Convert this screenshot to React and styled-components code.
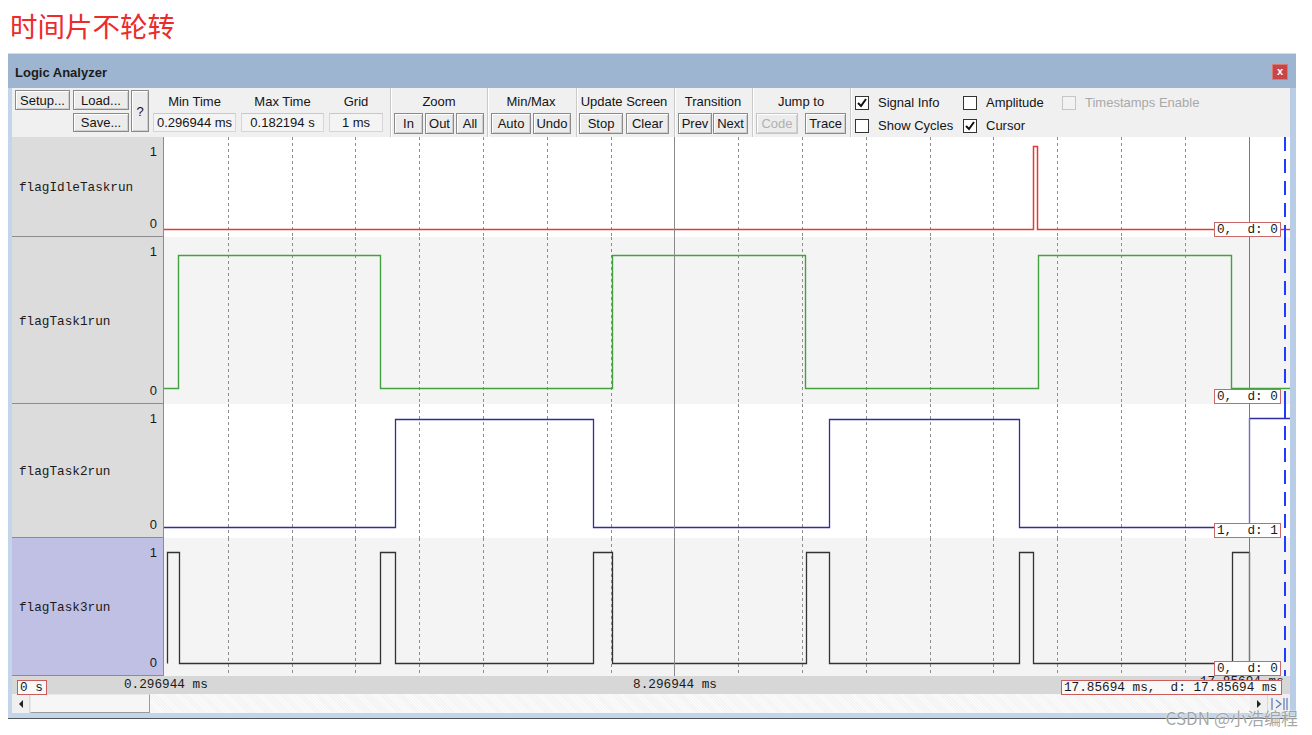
import React from 'react';
import styled, { createGlobalStyle } from 'styled-components';

const GlobalStyle = createGlobalStyle`
  html, body {
    margin: 0;
    padding: 0;
    background: #ffffff;
  }
  body {
    font-family: "Liberation Sans", Arial, sans-serif;
  }
  * {
    box-sizing: border-box;
  }
`;

// plot geometry (pixels)
const PLOT_W = 1126;
const GRID = 63.8;
const BOX_LEFT = 1050;

const signals = [
  {
    name: 'flagIdleTaskrun',
    h: 100,
    color: '#e43a36',
    width: 1.5,
    bg: '#ffffff',
    value: '0,  d: 0',
    path: 'M0 92.5 H869.5 V9.5 H873.5 V92.5 H1126',
  },
  {
    name: 'flagTask1run',
    h: 167,
    color: '#41a23f',
    width: 1.4,
    bg: '#f4f4f4',
    value: '0,  d: 0',
    path: 'M0 151.5 H14.5 V18.5 H216.5 V151.5 H448.5 V18.5 H641.5 V151.5 H874.5 V18.5 H1067.5 V151.5 H1126',
  },
  {
    name: 'flagTask2run',
    h: 134,
    color: '#2e2e9c',
    width: 1.3,
    bg: '#ffffff',
    value: '1,  d: 1',
    path: 'M0 123.5 H231.5 V15.5 H429.5 V123.5 H665.5 V15.5 H855.5 V123.5 H1085.5 V14.5 H1126',
  },
  {
    name: 'flagTask3run',
    h: 138,
    color: '#333333',
    width: 1.3,
    bg: '#f4f4f4',
    selected: true,
    value: '0,  d: 0',
    path: 'M3.5 125.5 V14.5 H15.5 V125.5 H216.5 V14.5 H231.5 V125.5 H429.5 V14.5 H448.5 V125.5 H642.5 V14.5 H665.5 V125.5 H855.5 V14.5 H869.5 V125.5 H1068.5 V14.5 H1085.5 V125.5',
  },
];

const gridLines = Array.from({ length: 16 }, (_, i) => i + 1).filter(k => k !== 8);

const Check = ({ checked, disabled, children }) => (
  <CheckItem $disabled={disabled}>
    <CheckBox $disabled={disabled}>
      {checked && (
        <svg width="12" height="12" viewBox="0 0 12 12">
          <path d="M2 6 L5 9 L10 2" stroke="#111" strokeWidth="2" fill="none" />
        </svg>
      )}
    </CheckBox>
    {children}
  </CheckItem>
);

const SignalRow = ({ sig }) => (
  <Row $h={sig.h}>
    <LabelCell $selected={sig.selected}>
      <Level>1</Level>
      <SignalName>{sig.name}</SignalName>
      <Level>0</Level>
    </LabelCell>
    <Plot $bg={sig.bg}>
      <svg width={PLOT_W} height={sig.h} style={{ display: 'block' }}>
        {gridLines.map(k => (
          <line
            key={k}
            x1={Math.round(k * GRID) + 0.5}
            x2={Math.round(k * GRID) + 0.5}
            y1="0"
            y2={sig.h}
            stroke="#8e8e8e"
            strokeDasharray="3 3"
          />
        ))}
        <path d={sig.path} stroke={sig.color} strokeWidth={sig.width} fill="none" />
        <line x1="510.5" x2="510.5" y1="0" y2={sig.h} stroke="#8a8a8a" />
        <line x1="1085.5" x2="1085.5" y1="0" y2={sig.h} stroke="#7a7a7a" />
        <line x1="1121" x2="1121" y1="0" y2={sig.h} stroke="#1f3cff" strokeWidth="2" strokeDasharray="14 8" />
      </svg>
      <ValueTag>{sig.value}</ValueTag>
    </Plot>
  </Row>
);

const App = () => {
  return (
    <Page>
      <GlobalStyle />
      <Heading>时间片不轮转</Heading>

      <Window>
        <TitleBar>
          <TitleText>Logic Analyzer</TitleText>
          <CloseButton>x</CloseButton>
        </TitleBar>

        <Body>
          <Toolbar>
            <FileGroup>
              <FileCol $mr={1}>
                <Btn $w={55} $h={20}>Setup...</Btn>
              </FileCol>
              <FileCol>
                <Btn $w={56} $h={20}>Load...</Btn>
                <Btn $w={56} $h={19}>Save...</Btn>
              </FileCol>
              <Btn $w={18} $h={42}>?</Btn>
            </FileGroup>

            <TimeGroup>
              <Field>
                <GroupLabel>Min Time</GroupLabel>
                <ValueField $w={83}>0.296944 ms</ValueField>
              </Field>
              <Field>
                <GroupLabel>Max Time</GroupLabel>
                <ValueField $w={83}>0.182194 s</ValueField>
              </Field>
              <Field>
                <GroupLabel>Grid</GroupLabel>
                <ValueField $w={54}>1 ms</ValueField>
              </Field>
            </TimeGroup>
            <Separator />

            <Group $pl={2} $pr={3}>
              <GroupLabel>Zoom</GroupLabel>
              <BtnRow $gap={2}>
                <Btn $w={29}>In</Btn>
                <Btn $w={29}>Out</Btn>
                <Btn $w={28}>All</Btn>
              </BtnRow>
            </Group>
            <Separator />

            <Group $pl={2} $pr={5}>
              <GroupLabel>Min/Max</GroupLabel>
              <BtnRow $gap={2}>
                <Btn $w={40}>Auto</Btn>
                <Btn $w={38}>Undo</Btn>
              </BtnRow>
            </Group>
            <Separator />

            <Group $pl={1} $pr={5}>
              <GroupLabel>Update Screen</GroupLabel>
              <BtnRow $gap={3}>
                <Btn $w={44}>Stop</Btn>
                <Btn $w={43}>Clear</Btn>
              </BtnRow>
            </Group>
            <Separator />

            <Group $pl={2} $pr={4}>
              <GroupLabel>Transition</GroupLabel>
              <BtnRow $gap={1}>
                <Btn $w={34}>Prev</Btn>
                <Btn $w={35}>Next</Btn>
              </BtnRow>
            </Group>
            <Separator />

            <Group $pl={2} $pr={4}>
              <GroupLabel>Jump to</GroupLabel>
              <BtnRow $gap={7}>
                <Btn $w={42} disabled>Code</Btn>
                <Btn $w={41}>Trace</Btn>
              </BtnRow>
            </Group>
            <Separator />

            <CheckGrid>
              <Check checked>Signal Info</Check>
              <Check>Amplitude</Check>
              <Check disabled>Timestamps Enable</Check>
              <Check>Show Cycles</Check>
              <Check checked>Cursor</Check>
            </CheckGrid>
          </Toolbar>

          <Signals>
            {signals.map(sig => (
              <SignalRow key={sig.name} sig={sig} />
            ))}
          </Signals>

          <TimeBar>
            <TimeBox $left={5} $w={30}>0 s</TimeBox>
            <TimeLabel $left={112}>0.296944 ms</TimeLabel>
            <TimeLabel $left={663} $center>8.296944 ms</TimeLabel>
            <HiddenLabel>17.85694 ms</HiddenLabel>
            <TimeBox $left={1049} $w={221}>17.85694 ms,  d: 17.85694 ms</TimeBox>
          </TimeBar>

          <ScrollBar>
            <ScrollButton>
              <svg width="6" height="8" viewBox="0 0 6 8"><path d="M5 0 L1 4 L5 8 Z" fill="#222" /></svg>
            </ScrollButton>
            <ScrollThumb />
            <ScrollTrack />
            <ScrollButton>
              <svg width="6" height="8" viewBox="0 0 6 8"><path d="M1 0 L5 4 L1 8 Z" fill="#222" /></svg>
            </ScrollButton>
            <EndButton>
              <svg width="20" height="16" viewBox="0 0 20 16">
                <path d="M3 2 V14 M7 4 L12 8 L7 12 M15 2 V14 M18 2 V14" stroke="#5a78b8" strokeWidth="1.2" fill="none" />
              </svg>
            </EndButton>
          </ScrollBar>
        </Body>
      </Window>

      <Watermark>CSDN @小浩编程</Watermark>
    </Page>
  );
};

export default App;

const Page = styled.div`
  position: relative;
  width: 1312px;
  height: 735px;
  overflow: hidden;
  background: #ffffff;
`;

const Heading = styled.div`
  height: 53px;
  line-height: 50px;
  padding-left: 10px;
  font-family: "Noto Sans CJK SC", "Noto Sans", sans-serif;
  font-size: 27.5px;
  color: #ec2b2b;
`;

const Window = styled.div`
  margin-left: 8px;
  width: 1288px;
  border-top: 1px solid #d4dbe4;
`;

const TitleBar = styled.div`
  height: 34px;
  background: #9db5d1;
  display: flex;
  align-items: center;
  justify-content: space-between;
  padding: 0 8px 0 7px;
`;

const TitleText = styled.div`
  font-size: 13px;
  font-weight: 700;
  color: #1b1b1b;
  padding-top: 3px;
`;

const CloseButton = styled.div`
  width: 16px;
  height: 16px;
  margin-top: 1px;
  background: #c94646;
  border: 1px solid #d97a7a;
  color: #ffffff;
  font-size: 11px;
  font-weight: 700;
  line-height: 13px;
  text-align: center;
`;

const Body = styled.div`
  border-left: 4px solid #c3d5ea;
  border-right: 6px solid #b9cde6;
  border-bottom: 5px solid #c3d5ea;
  box-shadow: 0 1px 0 #555555;
  background: #f0f0f0;
`;

const Toolbar = styled.div`
  display: flex;
  height: 49px;
  padding-left: 3px;
  background: #f0f0f0;
  color: #141414;
`;

const FileGroup = styled.div`
  display: flex;
  align-items: flex-start;
  gap: 2px;
  padding-top: 2px;
`;

const FileCol = styled.div`
  display: flex;
  flex-direction: column;
  gap: 3px;
  margin-right: ${p => p.$mr || 0}px;
`;

const Btn = styled.button`
  width: ${p => p.$w}px;
  height: ${p => p.$h || 21}px;
  padding: 0;
  font-family: "Liberation Sans", Arial, sans-serif;
  font-size: 13px;
  color: ${p => (p.disabled ? '#b0b0b0' : '#141414')};
  background: #ececec;
  border: 1px solid ${p => (p.disabled ? '#c4c4c4' : '#8a8a8a')};
  box-shadow: inset 1px 1px 0 #ffffff, inset -1px -1px 0 #cfcfcf;
  border-radius: 0;
  white-space: nowrap;
  overflow: hidden;
`;

const TimeGroup = styled.div`
  display: flex;
  gap: 5px;
  padding: 4px 7px 0 4px;
`;

const Field = styled.div`
  display: flex;
  flex-direction: column;
  align-items: center;
`;

const GroupLabel = styled.div`
  height: 20px;
  line-height: 20px;
  font-size: 13px;
  white-space: nowrap;
`;

const ValueField = styled.div`
  width: ${p => p.$w}px;
  height: 19px;
  margin-top: 1px;
  background: #f4f4f4;
  border: 1px solid #d6d6d6;
  border-top-color: #c8c8c8;
  font-size: 13px;
  line-height: 17px;
  text-align: center;
  white-space: nowrap;
`;

const Separator = styled.div`
  width: 2px;
  align-self: stretch;
  border-left: 1px solid #c9c9c9;
  border-right: 1px solid #ffffff;
`;

const Group = styled.div`
  display: flex;
  flex-direction: column;
  align-items: center;
  padding: 4px ${p => p.$pr}px 0 ${p => p.$pl}px;
`;

const BtnRow = styled.div`
  display: flex;
  gap: ${p => p.$gap}px;
  margin-top: 1px;
`;

const CheckGrid = styled.div`
  display: grid;
  grid-template-columns: 108px 99px auto;
  grid-template-rows: 15px 15px;
  row-gap: 8px;
  padding: 7px 0 0 3px;
`;

const CheckItem = styled.div`
  display: flex;
  align-items: center;
  gap: 9px;
  font-size: 13px;
  line-height: 15px;
  white-space: nowrap;
  color: ${p => (p.$disabled ? '#a9a9a9' : '#141414')};
`;

const CheckBox = styled.div`
  width: 14px;
  height: 14px;
  display: flex;
  align-items: center;
  justify-content: center;
  background: ${p => (p.$disabled ? '#f2f2f2' : '#ffffff')};
  border: 1px solid ${p => (p.$disabled ? '#c6c6c6' : '#333333')};
`;

const Signals = styled.div`
  display: flex;
  flex-direction: column;
`;

const Row = styled.div`
  display: flex;
  height: ${p => p.$h}px;
`;

const LabelCell = styled.div`
  width: 152px;
  flex-shrink: 0;
  display: grid;
  grid-template-rows: auto 1fr auto;
  padding: 8px 6px 6px 7px;
  background: ${p => (p.$selected ? '#c0c0e4' : '#dcdcdc')};
  border-right: 1px solid #8c8c8c;
  border-bottom: 1px solid #8c8c8c;
`;

const Level = styled.div`
  justify-self: end;
  font-size: 13px;
  line-height: 13px;
  color: #1a1a1a;
`;

const SignalName = styled.div`
  align-self: center;
  font-family: "Liberation Mono", "Courier New", monospace;
  font-size: 12.7px;
  color: #1a1a1a;
`;

const Plot = styled.div`
  position: relative;
  flex: 1;
  overflow: hidden;
  background: ${p => p.$bg};
`;

const ValueTag = styled.div`
  position: absolute;
  left: ${BOX_LEFT}px;
  bottom: 0;
  width: 67px;
  height: 15px;
  padding-left: 2px;
  background: #ffffff;
  border: 1px solid #c86a6a;
  font-family: "Liberation Mono", "Courier New", monospace;
  font-size: 12.7px;
  line-height: 13px;
  white-space: pre;
  color: #1a1a1a;
`;

const TimeBar = styled.div`
  position: relative;
  height: 18px;
  background: #d7d7d7;
  font-family: "Liberation Mono", "Courier New", monospace;
  font-size: 12.7px;
  color: #1a1a1a;
`;

const TimeLabel = styled.div`
  position: absolute;
  top: 2px;
  left: ${p => p.$left}px;
  transform: ${p => (p.$center ? 'translateX(-50%)' : 'none')};
  line-height: 14px;
  white-space: pre;
`;

// cursor time label, mostly covered by the end box as in the original
const HiddenLabel = styled.div`
  position: absolute;
  top: 0;
  left: 1188px;
  height: 4px;
  overflow: hidden;
  line-height: 12px;
  white-space: pre;
`;

const TimeBox = styled.div`
  position: absolute;
  z-index: 1;
  top: 4px;
  left: ${p => p.$left}px;
  width: ${p => p.$w}px;
  height: 15px;
  padding-left: 2px;
  background: #f8f8f8;
  border: 1px solid #cc5c5c;
  line-height: 13px;
  white-space: pre;
`;

const ScrollBar = styled.div`
  display: flex;
  height: 19px;
  background: #f0f0f0;
`;

const ScrollButton = styled.div`
  width: 18px;
  display: flex;
  align-items: center;
  justify-content: center;
  background: #f0f0f0;
  border-right: 1px solid #d8d8d8;
`;

const ScrollThumb = styled.div`
  width: 120px;
  background: #f6f6f6;
  border: 1px solid #9a9a9a;
  border-top-color: #e8e8e8;
  border-left-color: #e8e8e8;
`;

const ScrollTrack = styled.div`
  flex: 1;
  background: repeating-linear-gradient(45deg, #f3f3f3 0 1px, #fbfbfb 1px 2px);
`;

const EndButton = styled.div`
  width: 22px;
  display: flex;
  align-items: center;
  justify-content: center;
  background: #f0f0f0;
`;

const Watermark = styled.div`
  position: absolute;
  right: 14px;
  bottom: 7px;
  font-family: "Noto Sans CJK SC", "Noto Sans", sans-serif;
  font-size: 17px;
  line-height: 20px;
  color: rgba(150, 150, 150, 0.85);
  text-shadow: 0 0 2px #ffffff;
`;
